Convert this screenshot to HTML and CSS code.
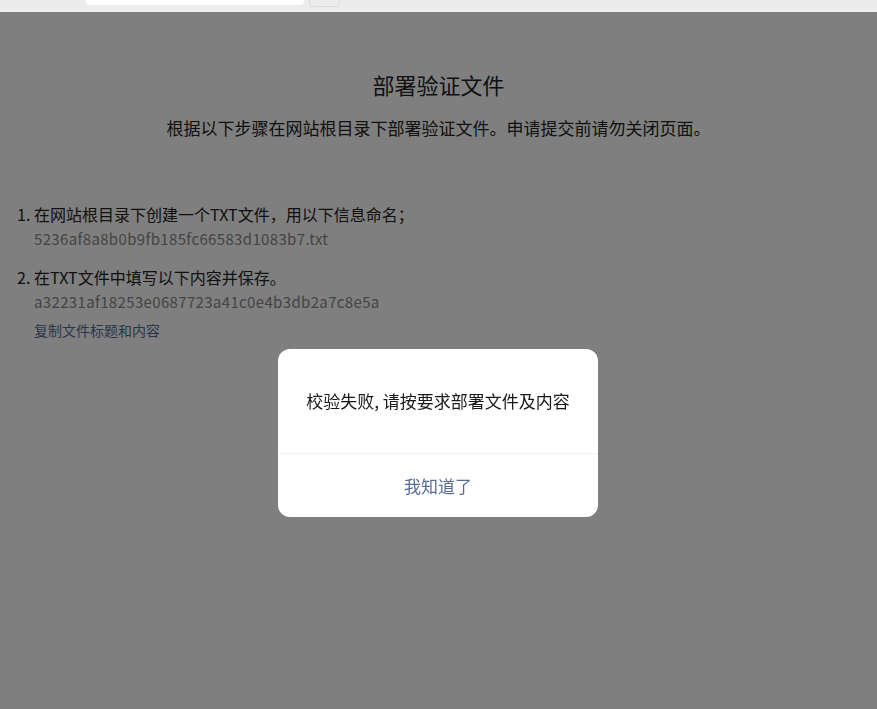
FILE: index.html
```html
<!DOCTYPE html>
<html lang="zh-CN">
<head>
	<meta charset="UTF-8">
	<title>部署验证文件</title>
	<link rel="stylesheet" href="styles.css">
</head>
<body>

	<div class="topbar">
		<span class="topbar-input"></span>
		<span class="topbar-btn"></span>
	</div>

	<div class="verify">
		<h1 class="verify-title">部署验证文件</h1>
		<p class="verify-desc">根据以下步骤在网站根目录下部署验证文件。申请提交前请勿关闭页面。</p>

		<ol class="step-list">
			<li class="step-item">
				<div class="step-text">在网站根目录下创建一个TXT文件，用以下信息命名；</div>
				<div class="step-code">5236af8a8b0b9fb185fc66583d1083b7.txt</div>
			</li>
			<li class="step-item">
				<div class="step-text">在TXT文件中填写以下内容并保存。</div>
				<div class="step-code">a32231af18253e0687723a41c0e4b3db2a7c8e5a</div>
				<a href="#" class="step-copy">复制文件标题和内容</a>
			</li>
		</ol>
	</div>

	<!-- dialog -->
	<div class="mask">
		<div class="dialog">
			<div class="dialog-bd">校验失败, 请按要求部署文件及内容</div>
			<div class="dialog-ft">
				<a href="#" class="dialog-btn">我知道了</a>
			</div>
		</div>
	</div>
	<!-- //dialog -->

</body>
</html>
```

FILE: styles.css
```css
body{
	margin: 0;
	font-family: "Noto Sans CJK SC", "Noto Sans", sans-serif;
	color: #222;
	background: #fff;
}
h1, p, ol, li{ margin: 0; padding: 0; }
a{ text-decoration: none; }

.topbar{
	display: flex;
	align-items: flex-start;
	height: 12px;
	padding-left: 86px;
	background: #ececec;
}
.topbar-input{
	display: block;
	width: 218px;
	height: 5px;
	background: #fff;
	border-radius: 0 0 4px 4px;
}
.topbar-btn{
	display: block;
	width: 29px;
	height: 6px;
	margin-left: 5px;
	border: 1px solid #dcdcdc;
	border-top: 0;
	border-radius: 0 0 4px 4px;
}

.verify{ padding-top: 57px; }
.verify-title{
	font-size: 22px;
	font-weight: normal;
	line-height: 30px;
	text-align: center;
}
.verify-desc{
	margin-top: 17px;
	font-size: 17px;
	line-height: 24px;
	text-align: center;
}

.step-list{
	margin-top: 62px;
	padding-left: 34px;
	font-size: 16px;
}
.step-item + .step-item{ margin-top: 13px; }
.step-text{ line-height: 24px; }
.step-code{
	font-size: 15px;
	line-height: 26px;
	letter-spacing: 0.35px;
	color: #888;
}
.step-copy{
	display: block;
	margin-top: 5px;
	font-size: 14px;
	line-height: 20px;
	color: #576b95;
}

/* dialog */
.mask{
	position: fixed;
	top: 12px;
	left: 0;
	right: 0;
	bottom: 0;
	display: flex;
	justify-content: center;
	align-items: flex-start;
	padding: 337px 1px 0 0;
	background: rgba(0, 0, 0, 0.5);
}
.dialog{
	width: 320px;
	background: #fff;
	border-radius: 12px;
	overflow: hidden;
	text-align: center;
}
.dialog-bd{
	padding: 40px 24px;
	font-size: 17px;
	line-height: 24px;
	color: rgba(0, 0, 0, 0.9);
}
.dialog-ft{ border-top: 1px solid #f2f2f2; }
.dialog-btn{
	display: block;
	height: 63px;
	line-height: 63px;
	font-size: 17px;
	color: #576b95;
}
```
